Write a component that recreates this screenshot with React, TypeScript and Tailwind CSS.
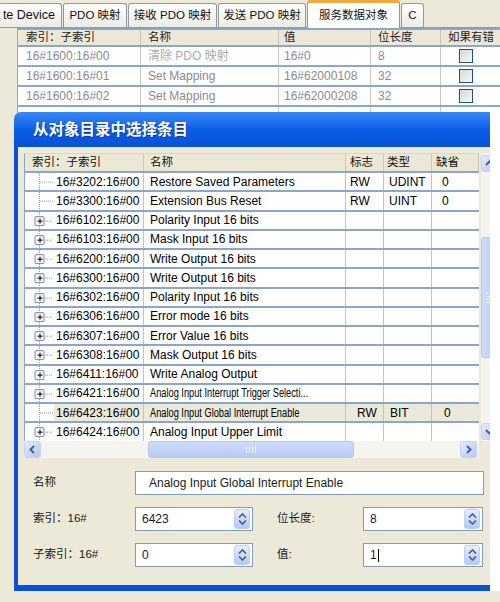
import React from 'react';

type TreeRow = {
  idx: string;
  name: string;
  flag?: string;
  type?: string;
  def?: string;
  leaf?: boolean;
  narrow?: boolean;
  selected?: boolean;
};

const treeRows: TreeRow[] = [
  { idx: '16#3202:16#00', name: 'Restore Saved Parameters', flag: 'RW', type: 'UDINT', def: '0', leaf: true },
  { idx: '16#3300:16#00', name: 'Extension Bus Reset', flag: 'RW', type: 'UINT', def: '0', leaf: true },
  { idx: '16#6102:16#00', name: 'Polarity Input 16 bits' },
  { idx: '16#6103:16#00', name: 'Mask Input 16 bits' },
  { idx: '16#6200:16#00', name: 'Write Output 16 bits' },
  { idx: '16#6300:16#00', name: 'Write Output 16 bits' },
  { idx: '16#6302:16#00', name: 'Polarity Input 16 bits' },
  { idx: '16#6306:16#00', name: 'Error mode 16 bits' },
  { idx: '16#6307:16#00', name: 'Error Value 16 bits' },
  { idx: '16#6308:16#00', name: 'Mask Output 16 bits' },
  { idx: '16#6411:16#00', name: 'Write Analog Output' },
  { idx: '16#6421:16#00', name: 'Analog Input Interrupt Trigger Selecti...', narrow: true },
  { idx: '16#6423:16#00', name: 'Analog Input Global Interrupt Enable', flag: 'RW', type: 'BIT', def: '0', leaf: true, narrow: true, selected: true },
  { idx: '16#6424:16#00', name: 'Analog Input Upper Limit' },
];

const tabs = [
  { label: 'te Device', cls: 'w-[66px] ml-[-4px] justify-end pr-[6px] text-[12.5px]' },
  { label: 'PDO 映射', cls: 'w-[64px] justify-center' },
  { label: '接收 PDO 映射', cls: 'w-[89px] justify-center' },
  { label: '发送 PDO 映射', cls: 'w-[88px] justify-center' },
  { label: '服务数据对象', cls: 'w-[93px] justify-center', active: true },
  { label: 'C', cls: 'w-[23px] justify-center' },
];

const topRows = [
  ['16#1600:16#00', '清除 PDO 映射', '16#0', '8'],
  ['16#1600:16#01', 'Set Mapping', '16#62000108', '32'],
  ['16#1600:16#02', 'Set Mapping', '16#62000208', '32'],
];

const TreeGlyph = ({ leaf }: { leaf?: boolean }) => (
  <svg width="29" height="100%" className="shrink-0 h-full">
    <line x1="14.5" y1="0" x2="14.5" y2="100%" stroke="#9c9c9c" strokeDasharray="1 1" />
    <svg x="0" y="50%" overflow="visible">
      {leaf ? (
        <line x1="15" y1="0.5" x2="28" y2="0.5" stroke="#9c9c9c" strokeDasharray="1 1" />
      ) : (
        <>
          <line x1="20" y1="0.5" x2="28" y2="0.5" stroke="#9c9c9c" strokeDasharray="1 1" />
          <rect x="10" y="-4" width="9" height="9" rx="1" fill="#f3f4f6" stroke="#7a8a99" />
          <path d="M12.5 0.5h5M15 -2v5" stroke="#000" />
        </>
      )}
    </svg>
  </svg>
);

const arrows = {
  up: 'M4 9 L7.5 5.5 L11 9',
  down: 'M4 6 L7.5 9.5 L11 6',
  left: 'M9 4 L5.5 7.5 L9 11',
  right: 'M6 4 L9.5 7.5 L6 11',
};

const ScrollBtn = ({ dir }: { dir: 'up' | 'down' | 'left' | 'right' }) => (
  <div className="w-[17px] h-[17px] shrink-0 rounded-[3px] border border-[#c3d3fb] bg-linear-to-br from-[#e4ecfe] to-[#b5c8f5] flex items-center justify-center">
    <svg width="15" height="15" viewBox="0 0 15 15">
      <path d={arrows[dir]} fill="none" stroke="#4d6185" strokeWidth="2" />
    </svg>
  </div>
);

const Spinner = () => (
  <div className="w-[16px] h-[20px] shrink-0 rounded-[3px] border border-[#bccdf4] bg-linear-to-b from-[#e6eefe] to-[#b5c9f6] flex flex-col items-center justify-center gap-[2px]">
    <svg width="9" height="5" viewBox="0 0 9 5">
      <path d="M1 4.5 L4.5 1 L8 4.5" fill="none" stroke="#4d6185" strokeWidth="1.7" />
    </svg>
    <svg width="9" height="5" viewBox="0 0 9 5">
      <path d="M1 0.5 L4.5 4 L8 0.5" fill="none" stroke="#4d6185" strokeWidth="1.7" />
    </svg>
  </div>
);

const SpinInput = ({ value, width, caret }: { value: string; width: string; caret?: boolean }) => (
  <div className={`${width} h-[24px] shrink-0 border border-[#7f9db9] bg-white flex items-center pl-[6px] pr-[2px]`}>
    <span className="flex-1 flex items-center">
      {value}
      {caret && <span className="inline-block w-[1px] h-[13px] bg-black ml-[1px]" />}
    </span>
    <Spinner />
  </div>
);

const TabBar = () => (
  <div className="flex items-end h-[28px] gap-[1px] border-b border-[#919b9c]">
    {tabs.map((t) => (
      <div
        key={t.label}
        className={`flex items-center shrink-0 rounded-t-[3px] border border-b-0 border-[#919b9c] text-[11.5px] ${t.cls} ${
          t.active
            ? 'h-[28px] mb-[-1px] bg-white border-t-[3px] border-t-[#f0a83a]'
            : 'h-[24px] bg-linear-to-b from-white to-[#ecebe4]'
        }`}
      >
        {t.label}
      </div>
    ))}
  </div>
);

const topCols = ['w-[123px] pl-[8px]', 'w-[138px] pl-[7px]', 'w-[92px] pl-[5px]', 'w-[70px] pl-[7px]', 'w-[80px] pl-[7px]'];

const TopTable = () => (
  <div className="ml-[17px] h-[563px] bg-white border-t-2 border-l border-[#8aa6c9] text-[12px]">
    <div className="flex h-[17px] bg-[#ebe8d7] border-b-2 border-[#8aa6c9] text-[11.5px] text-[#222]">
      {['索引：子索引', '名称', '值', '位长度', '如果有错'].map((h, i) => (
        <div key={h} className={`${topCols[i]} shrink-0 flex items-center border-r border-[#c9c7b8] overflow-hidden whitespace-nowrap`}>
          {h}
        </div>
      ))}
    </div>
    {topRows.map((r, ri) => (
      <div key={ri} className="flex h-[20px] border-b-2 border-[#8aa6c9] text-[#8a8a8a]">
        {r.map((c, i) => (
          <div
            key={i}
            className={`${topCols[i]} shrink-0 flex items-center border-r border-[#c5c5c5] whitespace-nowrap ${ri === 0 && i === 1 ? 'text-[#ababab]' : ''}`}
          >
            {c}
          </div>
        ))}
        <div className={`${topCols[4]} shrink-0 flex items-center pl-[18px]`}>
          <div className="w-[14px] h-[14px] border border-[#1c5180] bg-linear-to-br from-[#d9d9d3] to-[#f7f7f5]" />
        </div>
      </div>
    ))}
    <div className="flex h-[20px]">
      {topCols.map((c, i) => (
        <div key={i} className={`${c} shrink-0 border-r border-[#c5c5c5]`} />
      ))}
    </div>
  </div>
);

const treeCols = ['w-[120px]', 'w-[202px]', 'w-[38px]', 'w-[48px]', 'w-[47px]'];

const Dialog = () => (
  <div className="absolute left-[14px] top-[112px] w-[476px] h-[479px] flex flex-col overflow-hidden rounded-tl-[7px]">
    <div className="h-[35px] shrink-0 flex items-center pl-[19px] bg-linear-to-b from-[#3a8af6] via-[#0b5de8] to-[#0451d6] text-white text-[15.5px] font-bold [text-shadow:1px_1px_0_#0b3a9e]">
      从对象目录中选择条目
    </div>
    <div className="flex-1 flex flex-col bg-[#ece9d8] border-l-4 border-b-[6px] border-[#0a50d8] pl-[6px] pt-[6px]">
      <div className="flex">
        <div className="w-[455px] shrink-0 flex flex-col">
          <div className="flex h-[20px] bg-[#ebe8d6] border-t border-t-[#d3d8de] border-b-2 border-[#8aa6c9] text-[11.5px]">
            {['索引：子索引', '名称', '标志', '类型', '缺省'].map((h, i) => (
              <div
                key={h}
                className={`${treeCols[i]} ${['pl-[7px] border-l border-l-[#8aa6c9]', 'pl-[6px]', 'pl-[4px]', 'pl-[3px]', 'pl-[4px]'][i]} shrink-0 flex items-center border-r border-[#cac8b8]`}
              >
                {h}
              </div>
            ))}
          </div>
          <div className="h-[268px] overflow-hidden bg-white">
            {treeRows.map((r) => (
              <div key={r.idx} className="flex h-[19.25px] border-b-2 border-[#8aa6c9] text-[12px] text-black">
                <div className={`${treeCols[0]} shrink-0 flex items-stretch border-l border-l-[#8aa6c9] border-r border-[#c3c3c3]`}>
                  <TreeGlyph leaf={r.leaf} />
                  <div className={`flex-1 flex items-center pl-[2px] ${r.selected ? 'bg-[#ebe9d9]' : ''}`}>{r.idx}</div>
                </div>
                <div className={`${treeCols[1]} shrink-0 flex items-center pl-[6px] border-r border-[#c3c3c3] overflow-hidden whitespace-nowrap ${r.selected ? 'bg-[#ebe9d9]' : ''}`}>
                  {r.narrow ? (
                    <span className="inline-block text-[12px] scale-x-[0.77] origin-left">{r.name}</span>
                  ) : (
                    r.name
                  )}
                </div>
                <div className={`${treeCols[2]} shrink-0 flex items-center border-r border-[#c3c3c3] ${r.selected ? 'bg-[#ebe9d9] pl-[11px]' : 'pl-[4px]'}`}>
                  {r.flag}
                </div>
                <div className={`${treeCols[3]} shrink-0 flex items-center border-r border-[#c3c3c3] ${r.selected ? 'bg-[#ebe9d9] pl-[6px]' : 'pl-[5px]'}`}>
                  {r.type}
                </div>
                <div className={`${treeCols[4]} shrink-0 flex items-center ${r.selected ? 'bg-[#ebe9d9] pl-[12px]' : 'pl-[10px]'}`}>
                  {r.def}
                </div>
              </div>
            ))}
          </div>
          <div className="flex items-center h-[17px] bg-[#f5f4ef] pr-[2px]">
            <ScrollBtn dir="left" />
            <div className="w-[107px] shrink-0" />
            <div className="w-[206px] h-[17px] shrink-0 rounded-[3px] border border-[#b6c8f3] bg-linear-to-b from-[#cddcfd] to-[#b8cbf6] flex items-center justify-center gap-[2px]">
              {[0, 1, 2, 3].map((i) => (
                <div key={i} className="w-[1px] h-[7px] bg-[#eef3ff]" />
              ))}
            </div>
            <div className="flex-1" />
            <ScrollBtn dir="right" />
          </div>
        </div>
        <div className="ml-[2px] w-[17px] h-[288px] shrink-0 flex flex-col bg-[#f5f4ef] pt-[2px] pb-[1px]">
          <ScrollBtn dir="up" />
          <div className="h-[65px] shrink-0" />
          <div className="h-[121px] w-[17px] shrink-0 rounded-[3px] border border-[#b6c8f3] bg-linear-to-r from-[#cddcfd] to-[#b8cbf6] flex flex-col items-center justify-center gap-[2px]">
            {[0, 1, 2, 3].map((i) => (
              <div key={i} className="h-[1px] w-[7px] bg-[#eef3ff]" />
            ))}
          </div>
          <div className="flex-1" />
          <ScrollBtn dir="down" />
        </div>
      </div>

      <div className="flex flex-col gap-[12px] pt-[13px] pl-[9px] text-[12px] text-[#1a1a1a]">
        <div className="flex items-center h-[24px]">
          <span className="w-[102px] shrink-0 text-[11.5px]">名称</span>
          <div className="w-[349px] h-[24px] shrink-0 border border-[#7f9db9] bg-white flex items-center pl-[13px]">
            Analog Input Global Interrupt Enable
          </div>
        </div>
        <div className="flex items-center h-[24px]">
          <span className="w-[102px] shrink-0 text-[11.5px]">索引：16#</span>
          <SpinInput value="6423" width="w-[118px]" />
          <span className="w-[86px] ml-[24px] shrink-0 text-[11.5px]">位长度:</span>
          <SpinInput value="8" width="w-[120px]" />
        </div>
        <div className="flex items-center h-[24px]">
          <span className="w-[102px] shrink-0 text-[11.5px]">子索引：16#</span>
          <SpinInput value="0" width="w-[118px]" />
          <span className="w-[86px] ml-[24px] shrink-0 text-[11.5px]">值:</span>
          <SpinInput value="1" width="w-[120px]" caret />
        </div>
      </div>
    </div>
  </div>
);

export default function App() {
  return (
    <div className="relative w-[500px] h-[602px] overflow-hidden bg-[#ece9d8] text-[12px] text-[#111] font-['Liberation_Sans','Noto_Sans_CJK_SC',sans-serif]">
      <TabBar />
      <TopTable />
      <Dialog />
    </div>
  );
}
